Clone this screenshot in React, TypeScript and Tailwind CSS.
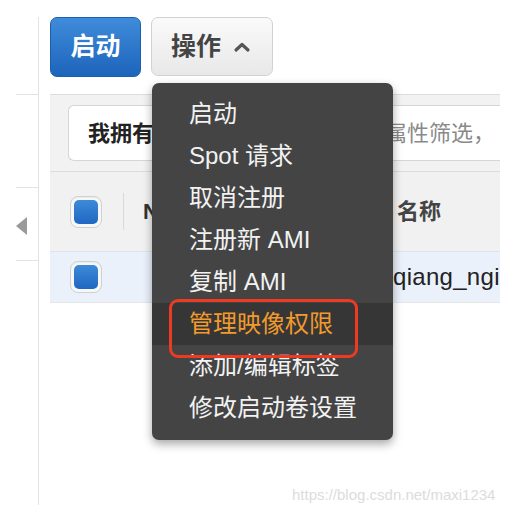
import React from "react";

const CJK = '"Liberation Sans", "Noto Sans CJK SC", sans-serif';

function Checkbox() {
  return (
    <div className="w-[32px] h-[32px] rounded-[8px] border border-[#d0d0d0] bg-[#f7f7f7] flex items-center justify-center shadow-[inset_0_1px_1px_rgba(0,0,0,0.05)]">
      <div className="w-[24px] h-[24px] rounded-[5px] bg-gradient-to-b from-[#3d8ad8] to-[#1f67c2]" />
    </div>
  );
}

const items = [
  "启动",
  "Spot 请求",
  "取消注册",
  "注册新 AMI",
  "复制 AMI",
  "管理映像权限",
  "添加/编辑标签",
  "修改启动卷设置",
];

export default function App() {
  return (
    <div
      className="w-[516px] h-[514px] bg-white relative overflow-hidden"
      style={{ fontFamily: CJK }}
    >
      <div className="flex h-full">
        {/* left collapsed sidebar */}
        <div className="w-[39px] pl-[16px] pt-[17px] pb-[9px] flex flex-col">
          <div className="flex-1 border-r border-[#e3e3e3] flex flex-col">
            <div className="h-[77px]" />
            <div className="h-[93px] border-t border-[#e3e3e3]" />
            <div className="h-[73px] border-t border-[#e3e3e3] flex items-center">
              <div className="w-0 h-0 border-y-[9px] border-y-transparent border-r-[11px] border-r-[#9a9a9a] mt-[4px]" />
            </div>
            <div className="flex-1 border-t border-[#e3e3e3]" />
          </div>
        </div>

        {/* main */}
        <div className="ml-[11px] w-[450px] pt-[17px] flex flex-col">
          <div className="flex gap-[10px] h-[60px]">
            <div className="w-[91px] h-[60px] rounded-[7px] bg-gradient-to-b from-[#3f8cda] to-[#1d64bb] border border-[#1c5fb2] flex items-center justify-center text-white text-[25px] font-bold">
              启动
            </div>
            <div className="w-[122px] h-[59px] rounded-[7px] bg-gradient-to-b from-[#fafafa] to-[#e8e8e8] border border-[#d2d2d2] flex items-center pl-[19px] text-[#444] text-[25px] font-bold">
              操作
              <svg width="18" height="12" viewBox="0 0 18 12" className="ml-[12px]">
                <path d="M3 9 L9 3.5 L15 9" stroke="#555" strokeWidth="3.2" fill="none" strokeLinecap="round" strokeLinejoin="round" />
              </svg>
            </div>
          </div>

          {/* toolbar */}
          <div className="mt-[17px] h-[77px] bg-[#f2f2f2] border-t border-[#dddddd] pl-[18px] pt-[10px]">
            <div className="h-[56px] bg-white border border-[#d6d6d6] border-r-0 rounded-l-[6px] flex items-center">
              <span className="ml-[19px] text-[22px] font-bold text-[#222]">我拥有的</span>
              <span className="ml-auto mr-[5px] text-[22px] text-[#8a8a8a]">按属性筛选，</span>
            </div>
          </div>

          {/* header row */}
          <div className="h-[80px] bg-[#f1f1f1] border-t border-[#dcdcdc] flex items-center pl-[20px]">
            <Checkbox />
            <div className="ml-[21px] w-px h-[37px] bg-[#dadada]" />
            <div className="flex-1 pl-[19px] text-[22px] font-bold text-[#333]">N</div>
            <div className="w-[103px] text-[22px] font-bold text-[#444]">名称</div>
          </div>

          {/* data row */}
          <div className="h-[52px] bg-[#eaf1fb] border-t border-[#dde4ee] border-b border-b-[#e6e6e6] flex items-center pl-[20px]">
            <Checkbox />
            <div className="flex-1" />
            <div className="w-[107px] whitespace-nowrap text-[24px] tracking-[0.3px] text-[#222]">
              qiang_ngi
            </div>
          </div>
        </div>
      </div>

      {/* dropdown menu */}
      <div className="absolute left-[152px] top-[83px] w-[241px] h-[357px] bg-[#444444] rounded-[7px] shadow-[0_4px_10px_rgba(0,0,0,0.35)] pt-[10px]">
        {items.map((t, i) => (
          <div
            key={t}
            className={
              i === 5
                ? "h-[42px] flex items-center pl-[37px] text-[24px] text-[#f29b2c] bg-[#363636]"
                : "h-[42px] flex items-center pl-[37px] text-[24px] text-[#f2f2f2]"
            }
          >
            {t}
          </div>
        ))}
        <div className="absolute left-[17px] top-[216px] w-[189px] h-[59px] rounded-[9px] border-[3px] border-[#ec3b22]" />
      </div>

      {/* watermark */}
      <div className="absolute left-[292px] top-[484px] text-[15px] text-[#dcdcdc] whitespace-nowrap">
        https://blog.csdn.net/maxi1234
      </div>
    </div>
  );
}
